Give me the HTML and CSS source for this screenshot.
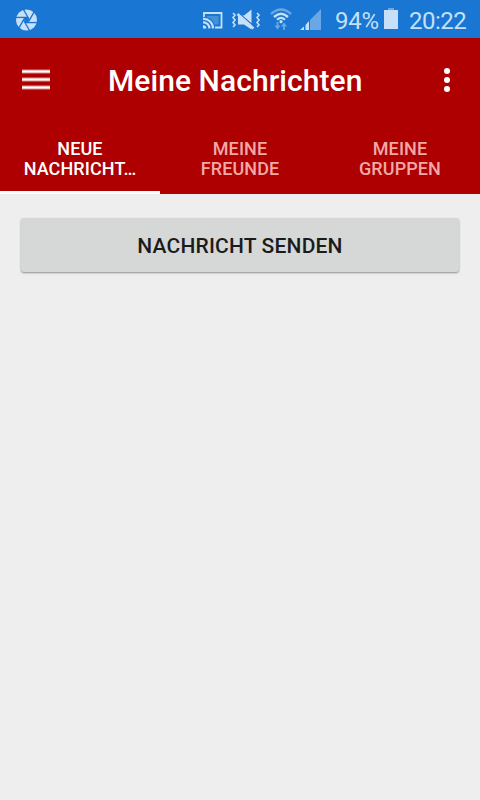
FILE: index.html
```
<!DOCTYPE html>
<html lang="de">
<head>
  <meta charset="UTF-8" />
  <title>Meine Nachrichten</title>
  <link rel="stylesheet" href="styles.css">
</head>
<body>
  <div class="status-bar">
    <svg class="shutter" width="22" height="22" viewBox="0 0 22 22">
      <circle cx="10.5" cy="11" r="10.5" fill="#c5e0f8" />
      <g transform="translate(10.5 11)" stroke="#1976d2" stroke-width="1.3">
        <path d="M1.5 -2.6 H-12" />
        <path d="M1.5 -2.6 H-12" transform="rotate(60)" />
        <path d="M1.5 -2.6 H-12" transform="rotate(120)" />
        <path d="M1.5 -2.6 H-12" transform="rotate(180)" />
        <path d="M1.5 -2.6 H-12" transform="rotate(240)" />
        <path d="M1.5 -2.6 H-12" transform="rotate(300)" />
        <circle r="2.4" fill="#1976d2" stroke="none" />
      </g>
    </svg>

    <svg class="cast" width="20" height="17" viewBox="0 0 20 17" fill="none" stroke="#c5e0f8">
      <path d="M1 5 V1 H18.5 V15.5 H12" stroke-width="1.8" />
      <path d="M4 4 H15.5 V12.5 H11.5 Q9.5 6.5 4 5.5 Z" fill="#c5e0f8" fill-opacity=".25" stroke="none" />
      <path d="M0 6.8 A9.5 9.5 0 0 1 10 16.5 M0 10.4 A6 6 0 0 1 6.4 16.5" stroke-width="2.2" />
      <path d="M0 13.2 A3 3 0 0 1 3.3 16.5 H0 Z" fill="#c5e0f8" stroke="none" />
    </svg>

    <svg class="mute" width="30" height="22" viewBox="0 0 30 22">
      <path d="M7 6.5 H13 L20.5 .5 V20.5 L13 15.5 H7 Z" fill="#c5e0f8" />
      <path d="M7 3.5 L24 18" stroke="#1976d2" stroke-width="1.3" />
      <path d="M6.5 5 L22.5 19.5" stroke="#c5e0f8" stroke-width="2.4" />
      <path d="M2 4 L4 6 L2 8.5 L4 11 L2 13.5 L4 16 L2 18 M26 4 L28 6 L26 8.5 L28 11 L26 13.5 L28 16 L26 18" fill="none" stroke="#c5e0f8" stroke-width="1.6" />
    </svg>

    <svg class="wifi" width="22" height="23" viewBox="0 0 22 23" fill="none">
      <path d="M1 6 Q11 -3 21 6" stroke="#69a8e4" stroke-width="2.5" />
      <path d="M4 9 Q11 2.5 18 9" stroke="#c5e0f8" stroke-width="2.4" />
      <path d="M7 11.7 Q11 8 15 11.7" stroke="#c5e0f8" stroke-width="2.2" />
      <circle cx="11" cy="13.7" r="1.6" fill="#c5e0f8" />
      <path d="M7.5 14 V19 M14 22 V17" stroke="#69a8e4" stroke-width="1.8" />
      <path d="M4.5 17.5 H10.5 L7.5 21.5 Z M11 18.5 H17 L14 14.5 Z" fill="#69a8e4" />
    </svg>

    <svg class="signal" width="22" height="22" viewBox="0 0 22 22">
      <path d="M21 0 V21 H10 V11 Z" fill="#69a8e4" />
      <path d="M0 21 L4 17.5 V21 Z M5.5 21 V16 L9 12 V21 Z" fill="#c5e0f8" />
    </svg>

    <span class="percent">94%</span>

    <svg class="battery" width="14" height="22" viewBox="0 0 14 22">
      <rect x="4" y="0" width="6" height="2" fill="#69a8e4" />
      <rect x="0" y="2" width="14" height="19" fill="#c5e0f8" />
    </svg>

    <span class="clock">20:22</span>
  </div>

  <header class="app-bar">
    <button class="menu-btn" aria-label="Menü">
      <svg width="28" height="22" viewBox="0 0 28 22">
        <path d="M0 2.5 H28 M0 10.5 H28 M0 18.5 H28" stroke="#fff" stroke-opacity=".55" stroke-width="4" />
        <path d="M0 2.5 H28 M0 10.5 H28 M0 18.5 H28" stroke="#fff" stroke-width="2" />
      </svg>
    </button>
    <h1>Meine Nachrichten</h1>
    <button class="more-btn" aria-label="Mehr">
      <svg width="6" height="24" viewBox="0 0 6 24" fill="#fff">
        <circle cx="3" cy="3" r="3" />
        <circle cx="3" cy="12" r="3" />
        <circle cx="3" cy="21" r="3" />
      </svg>
    </button>
  </header>

  <nav class="tabs">
    <a class="tab active">NEUE<br>NACHRICHT…</a>
    <a class="tab">MEINE<br>FREUNDE</a>
    <a class="tab">MEINE<br>GRUPPEN</a>
  </nav>

  <main>
    <button class="send-btn">NACHRICHT SENDEN</button>
  </main>
</body>
</html>
```
FILE: styles.css
```
* {
  box-sizing: border-box;
}
body {
  margin: 0;
  min-height: 800px;
  font-family: Roboto, sans-serif;
  background-color: #eee;
}
button {
  font-family: inherit;
  border: none;
  cursor: pointer;
}
svg {
  display: block;
  flex: none;
}
.status-bar {
  display: flex;
  align-items: flex-start;
  height: 38px;
  padding: 9px 0 0 16px;
  background-color: #1976d2;
  color: #c5e0f8;
  font-size: 24px;
  line-height: 24px;
}
.cast {
  margin: 3px 0 0 165px;
}
.mute {
  margin-left: 8px;
}
.wifi {
  margin: -1px 0 0 9px;
}
.signal {
  margin-left: 8px;
}
.percent {
  width: 49px;
  margin-left: 13px;
  letter-spacing: -0.3px;
}
.battery {
  margin: -1px 0 0 0;
}
.clock {
  margin-left: 11px;
  letter-spacing: -0.5px;
}
.app-bar {
  display: flex;
  align-items: center;
  height: 84px;
  padding: 0 30px 0 22px;
  background-color: #ae0000;
  color: white;
}
.menu-btn, .more-btn {
  padding: 0;
  background: none;
}
.app-bar h1 {
  flex: 1;
  margin: 0 0 0 58px;
  padding-top: 2px;
  font-size: 30px;
  font-weight: 500;
  line-height: 36px;
  letter-spacing: 0.07px;
}
.tabs {
  display: flex;
  height: 72px;
  background-color: #ae0000;
}
.tab {
  flex: 1;
  padding-top: 17px;
  color: #f0a8a8;
  font-size: 18px;
  font-weight: 500;
  line-height: 20px;
  letter-spacing: 0.1px;
  text-align: center;
}
.tab.active {
  color: white;
  border-bottom: 3px solid white;
}
main {
  padding: 24px 21px;
}
.send-btn {
  display: block;
  width: 100%;
  height: 54px;
  padding: 2px 0 0;
  border-radius: 3px;
  background-color: #d6d8d7;
  box-shadow: 0 1px 2px rgba(0, 0, 0, 0.4);
  color: #1b1b1b;
  font-size: 21px;
  font-weight: 500;
  letter-spacing: 0.18px;
}
```
